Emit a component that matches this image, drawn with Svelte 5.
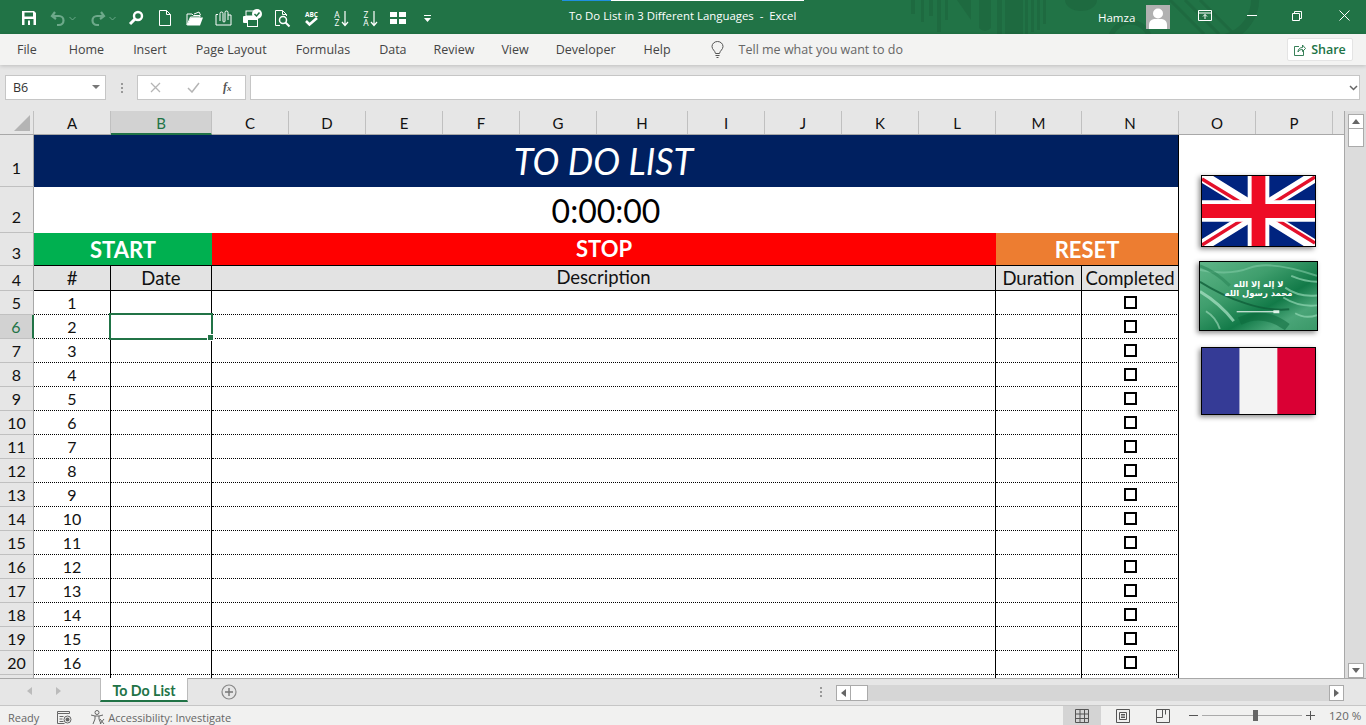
<script>
  const tabs = ["File", "Home", "Insert", "Page Layout", "Formulas", "Data", "Review", "View", "Developer", "Help"];

  // column widths in px, measured at 120% zoom
  const cols = [
    ["A", 77], ["B", 101], ["C", 77], ["D", 77], ["E", 77], ["F", 77], ["G", 77], ["H", 91],
    ["I", 77], ["J", 77], ["K", 77], ["L", 77], ["M", 86], ["N", 97], ["O", 77], ["P", 77],
  ];

  const rows = Array.from({ length: 16 }, (_, i) => ({ head: i + 5, num: i + 1 }));
</script>

<div class="window">
  <header class="titlebar">
    <svg class="pattern" viewBox="0 0 480 34" width="480" height="34" aria-hidden="true">
      <g fill="#1e6a40">
        <rect x="6" y="0" width="4" height="14" /><rect x="16" y="0" width="3" height="22" /><rect x="24" y="0" width="4" height="16" />
        <rect x="32" y="0" width="4" height="32" /><rect x="40" y="0" width="3" height="20" />
        <path d="M52 0l14 20V0zM74 0h12v28q-6 6-12 0z" />
        <rect x="92" y="0" width="5" height="34" /><rect x="100" y="0" width="18" height="34" />
        <rect x="120" y="0" width="3" height="34" /><rect x="126" y="0" width="3" height="32" /><rect x="132" y="0" width="3" height="30" /><rect x="138" y="0" width="3" height="24" />
        <path d="M160 0a16 11 0 0 0 32 0z" />
      </g>
      <g fill="none" stroke="#1e6a40" stroke-width="5">
        <circle cx="225" cy="42" r="20" />
        <path d="M265 0l34 34M280 0l34 34M295 0l34 34" stroke-width="3" />
        <path d="M350 -4a40 40 0 0 1-30 42" stroke-width="8" />
      </g>
    </svg>
    <div class="loadline"></div>

    <div class="qat">
      <svg class="ico save" width="16" height="16" viewBox="0 0 16 16"><path d="M1 1h12l2 2v12H1z" fill="#fff" /><rect x="3.5" y="2.5" width="8.5" height="4" fill="#217346" /><rect x="3.5" y="9" width="9" height="6" fill="#217346" /><rect x="7" y="10.5" width="2" height="4.5" fill="#fff" /></svg>
      <svg class="ico undo" width="16" height="16" viewBox="0 0 16 16"><path d="M5 2L2 6l4 3M2.5 6H9a4.5 4.5 0 0 1 0 9H7" fill="none" stroke="#6da98a" stroke-width="2.2" /></svg>
      <svg class="chev" width="7" height="5" viewBox="0 0 7 5"><path d="M.5 1L3.5 4l3-3" fill="none" stroke="#6da98a" /></svg>
      <svg class="ico redo" width="16" height="16" viewBox="0 0 16 16"><path d="M11 2l3 4-4 3M13.5 6H7a4.5 4.5 0 0 0 0 9h2" fill="none" stroke="#6da98a" stroke-width="2.2" /></svg>
      <svg class="chev" width="7" height="5" viewBox="0 0 7 5"><path d="M.5 1L3.5 4l3-3" fill="none" stroke="#6da98a" /></svg>
      <svg class="ico find" width="16" height="16" viewBox="0 0 16 16"><circle cx="10" cy="6" r="4" fill="none" stroke="#fff" stroke-width="2.4" /><path d="M7 9l-5 5" stroke="#fff" stroke-width="3" /></svg>
      <svg class="ico new" width="14" height="16" viewBox="0 0 14 16"><path d="M1.5.5h7l4 4v11h-11z" fill="none" stroke="#fff" /><path d="M8.5.5v4h4" fill="none" stroke="#fff" /></svg>
      <svg class="ico open" width="17" height="15" viewBox="0 0 17 15"><path d="M1 14V3h5l1.500 1.500H14V6H4.500z" fill="none" stroke="#fff" /><path d="M1 14.500l3.500-8H17l-3 8z" fill="#fff" /><path d="M8 3l5-2 1.500 3" fill="none" stroke="#fff" /></svg>
      <svg class="ico attach" width="17" height="16" viewBox="0 0 17 16"><path d="M3 4.500H1V15h15V5h-3" fill="none" stroke="#fff" /><path d="M5 11V3.500a1.500 1.500 0 0 1 3 0V11a1 1 0 0 0 2 0V2.500a1.500 1.500 0 0 1 3 0V10" fill="none" stroke="#fff" /></svg>
      <svg class="ico print" width="20" height="18" viewBox="0 0 20 18"><rect x="0" y="7" width="15" height="7" rx="1" fill="#fff" /><rect x="3" y="2" width="9" height="5" fill="none" stroke="#fff" /><rect x="4.500" y="10.500" width="10" height="7" fill="#217346" stroke="#fff" /><circle cx="14" cy="5" r="5" fill="#fff" /><path d="M11.500 5l2 2 3-3.500" fill="none" stroke="#217346" stroke-width="1.500" /></svg>
      <svg class="ico preview" width="17" height="17" viewBox="0 0 17 17"><path d="M1.500 15.500V.5h7l4 4V6M6 15.500H1.500M8.500.5v4h4" fill="none" stroke="#fff" /><circle cx="9" cy="10" r="3.500" fill="none" stroke="#fff" stroke-width="1.500" /><path d="M11.500 12.500l4 4" stroke="#fff" stroke-width="2" /></svg>
      <svg class="ico spell" width="17" height="17" viewBox="0 0 17 17"><text x="8.500" y="6.500" text-anchor="middle" class="mini">ABC</text><path d="M3 11l3.500 3.500L14 8" fill="none" stroke="#fff" stroke-width="2.600" /></svg>
      <svg class="ico sort" width="16" height="17" viewBox="0 0 16 17"><text x="4" y="7.500" text-anchor="middle" class="az">A</text><text x="4" y="16" text-anchor="middle" class="az">Z</text><path d="M12 1v14M9 12l3 3.500 3-3.500" fill="none" stroke="#fff" stroke-width="1.200" /></svg>
      <svg class="ico sort2" width="16" height="17" viewBox="0 0 16 17"><text x="4" y="7.500" text-anchor="middle" class="az">Z</text><text x="4" y="16" text-anchor="middle" class="az">A</text><path d="M12 1v14M9 12l3 3.500 3-3.500" fill="none" stroke="#fff" stroke-width="1.200" /></svg>
      <svg class="ico form" width="16" height="12" viewBox="0 0 16 12"><path d="M0 0h7v5H0zM9 0h7v5H9zM0 7h7v5H0zM9 7h7v5H9z" fill="#fff" /></svg>
      <svg class="ico more" width="9" height="7" viewBox="0 0 9 7"><path d="M1 .5h7" stroke="#fff" /><path d="M1 3h7L4.500 7z" fill="#fff" /></svg>
    </div>

    <div class="doc-title">To Do List in 3 Different Languages&nbsp; -&nbsp; Excel</div>

    <div class="win-right">
      <span class="user">Hamza</span>
      <span class="avatar">
        <svg width="24" height="24" viewBox="0 0 24 24"><circle cx="12" cy="8.500" r="5" fill="#fff" /><path d="M3 24v-4q0-5 5-6h8q5 1 5 6v4z" fill="#fff" /></svg>
      </span>
      <svg class="wbtn ribbon-opt" width="14" height="11" viewBox="0 0 14 11"><path d="M.5.5h13v10H.5zM.5 3h13M7 9V4.500M5 6.500l2-2 2 2" fill="none" stroke="#fff" /></svg>
      <svg class="wbtn min" width="10" height="1" viewBox="0 0 10 1"><path d="M0 .5h10" stroke="#fff" /></svg>
      <svg class="wbtn restore" width="10" height="10" viewBox="0 0 10 10"><path d="M.5 2.500h7v7h-7zM2.500 2.500v-2h7v7h-2" fill="none" stroke="#fff" /></svg>
      <svg class="wbtn close" width="11" height="11" viewBox="0 0 11 11"><path d="M.5.5l10 10M10.500.5l-10 10" stroke="#fff" /></svg>
    </div>
  </header>

  <nav class="ribbon">
    {#each tabs as tab}
      <span class="tab">{tab}</span>
    {/each}
    <svg class="bulb" width="13" height="17" viewBox="0 0 13 17"><path d="M4.500 12.500C4 9.500 1 8.500 1 5.500a5.500 5 0 0 1 11 0c0 3-3 4-3.500 7zM4.500 14.500h4M5.500 16.500h2" fill="none" stroke="#555" /></svg>
    <span class="tell">Tell me what you want to do</span>
    <button class="share">
      <svg width="12" height="12" viewBox="0 0 12 12"><path d="M5 2.500H.5v9h9V7M4 8c0-3 2-4.500 4.500-4.500V1l3 3.500-3 3V5.500C6.500 5.500 5 6 4 8z" fill="none" stroke="#217346" stroke-width=".9" /></svg>
      Share
    </button>
  </nav>

  <div class="formulabar">
    <div class="namebox">B6<i class="tri"></i></div>
    <span class="grip"></span>
    <div class="fx-buttons">
      <svg width="11" height="11" viewBox="0 0 11 11"><path d="M1 1l9 9M10 1l-9 9" stroke="#b5b5b5" stroke-width="1.300" /></svg>
      <svg width="13" height="11" viewBox="0 0 13 11"><path d="M1 6l4 4 7-9" fill="none" stroke="#b5b5b5" stroke-width="1.500" /></svg>
      <span class="fx">f<small>x</small></span>
    </div>
    <div class="fx-input"></div>
    <svg class="fx-expand" width="9" height="6" viewBox="0 0 9 6"><path d="M1 1l3.500 3.500L8 1" fill="none" stroke="#666" stroke-width="1.500" /></svg>
  </div>

  <div class="sheet">
    <div class="sheet-main">
      <div class="col-head">
        <div class="corner"><i></i></div>
        {#each cols as [name, w]}
          <div class="col" class:sel={name === "B"} style="width: {w}px">{name}</div>
        {/each}
      </div>

      <div class="grid">
        <div class="rh r1">1</div>
        <div class="title">TO DO LIST</div>
        <div class="blank"></div>

        <div class="rh r2">2</div>
        <div class="timer">0:00:00</div>
        <div class="blank"></div>

        <div class="rh r3">3</div>
        <div class="btn start">START</div>
        <div class="btn stop">STOP</div>
        <div class="btn reset">RESET</div>
        <div class="blank"></div>

        <div class="rh r4">4</div>
        <div class="th">#</div>
        <div class="th">Date</div>
        <div class="th desc">Description</div>
        <div class="th">Duration</div>
        <div class="th last">Completed</div>
        <div class="blank"></div>

        {#each rows as row}
          <div class="rh" class:sel={row.head === 6}>{row.head}</div>
          <div class="td num">{row.num}</div>
          <div class="td"></div>
          <div class="td"></div>
          <div class="td"></div>
          <div class="td last"><span class="check"></span></div>
          <div class="blank"></div>
        {/each}

        <div class="rh tail"></div>
        <div class="td tail"></div>
        <div class="td tail"></div>
        <div class="td tail"></div>
        <div class="td tail"></div>
        <div class="td last tail"></div>
        <div class="blank"></div>
      </div>

      <div class="selection"><i></i></div>

      <svg class="flag uk" viewBox="0 0 115 71" width="115" height="72" preserveAspectRatio="none">
        <rect width="115" height="71" fill="#00237f" />
        <path d="M0 0L115 71M115 0L0 71" stroke="#fff" stroke-width="12" />
        <path d="M0 3L46 31M115 68L69 40M115 1L70 29M0 70L45 42" stroke="#e4112b" stroke-width="3.500" />
        <path d="M57.500 0v71M0 35.500h115" stroke="#fff" stroke-width="22" />
        <path d="M57.500 0v71M0 35.500h115" stroke="#ee0c25" stroke-width="14" />
      </svg>

      <svg class="flag sa" viewBox="0 0 118 69" width="119" height="70" preserveAspectRatio="none">
        <defs>
          <linearGradient id="silk" x1="0" y1="0" x2="1" y2="1">
            <stop offset="0" stop-color="#5fb588" />
            <stop offset=".35" stop-color="#3f9e6d" />
            <stop offset=".62" stop-color="#127a48" />
            <stop offset=".8" stop-color="#4aa578" />
            <stop offset="1" stop-color="#3a9868" />
          </linearGradient>
        </defs>
        <rect width="118" height="69" fill="url(#silk)" />
        <g fill="none">
          <path d="M0 8Q30 14 50 6T118 14" stroke="#7fcaa3" stroke-width="2" opacity=".6" />
          <path d="M0 4Q16 10 30 24" stroke="#2f8a5c" stroke-width="3" opacity=".7" />
          <path d="M0 20Q22 34 46 42T90 48" stroke="#0f5f39" stroke-width="2" opacity=".8" />
          <path d="M0 30Q20 42 34 60" stroke="#a6dfc2" stroke-width="3" opacity=".75" />
          <path d="M6 50Q16 56 20 68" stroke="#a6dfc2" stroke-width="2" opacity=".6" />
          <path d="M86 26Q100 36 118 34M84 36Q100 46 118 44M96 52Q106 58 118 54M92 14Q106 20 118 20" stroke="#90d5b2" stroke-width="2" opacity=".7" />
          <path d="M40 60Q64 48 88 66" stroke="#0c6a3d" stroke-width="8" opacity=".55" />
        </g>
        <text x="59" y="25" text-anchor="middle" class="shahada">لا إله إلا الله</text>
        <text x="59" y="35" text-anchor="middle" class="shahada">محمد رسول الله</text>
        <path d="M37 50.500h42" stroke="#fff" stroke-width="1" />
        <path d="M74 49h6v3h-6z" fill="#dff3e8" />
      </svg>

      <svg class="flag fr" viewBox="0 0 114 67" width="115" height="68" preserveAspectRatio="none">
        <rect width="38" height="67" fill="#353b96" />
        <rect x="38" width="38" height="67" fill="#f3f3f3" />
        <rect x="76" width="38" height="67" fill="#da0034" />
      </svg>
    </div>

    <div class="vscroll">
      <span class="sbtn up"><i></i></span>
      <span class="vthumb"></span>
      <span class="vfill"></span>
      <span class="sbtn down"><i></i></span>
    </div>
  </div>

  <div class="sheetbar">
    <span class="nav-arrow left"></span>
    <span class="nav-arrow right"></span>
    <div class="sheet-tab">To Do List</div>
    <svg class="add" width="16" height="16" viewBox="0 0 16 16"><circle cx="8" cy="8" r="7" fill="none" stroke="#888" stroke-width="1.200" /><path d="M8 4v8M4 8h8" stroke="#777" stroke-width="1.400" /></svg>
    <span class="grip bar-grip"></span>
    <div class="hscroll">
      <span class="hbtn"><i class="l"></i></span>
      <span class="hthumb"></span>
      <span class="hfill"></span>
      <span class="hbtn"><i class="r"></i></span>
    </div>
  </div>

  <footer class="status">
    <span class="ready">Ready</span>
    <svg class="macro" width="15" height="13" viewBox="0 0 15 13"><path d="M.5.5h12v2H.5zM.5 2.500v10h7M2.500 5.500h4M2.500 8h3M2.500 10.500h4" fill="none" stroke="#666" /><circle cx="10.500" cy="8.500" r="3.500" fill="none" stroke="#666" /><circle cx="10.500" cy="8.500" r="2" fill="#666" /></svg>
    <svg class="access" width="15" height="15" viewBox="0 0 15 15"><circle cx="7" cy="2.500" r="2" fill="none" stroke="#666" /><path d="M1 5l4 1h4l4-1M5 6v3l-2 5M9 6v3l2 5M10 9l4 5M14 9l-4 5" fill="none" stroke="#666" /></svg>
    <span class="acc-text">Accessibility: Investigate</span>
    <div class="status-right">
      <span class="view active">
        <svg width="14" height="14" viewBox="0 0 14 14"><path d="M.5.5h13v13H.5zM.5 5h13M.5 9.500h13M5 .5v13M9.500 .5v13" fill="none" stroke="#555" /></svg>
      </span>
      <span class="view">
        <svg width="14" height="14" viewBox="0 0 14 14"><path d="M.5.5h13v13H.5zM3.500 3.500h7v7h-7zM5 5.500h4M5 7h4M5 8.500h4" fill="none" stroke="#555" /></svg>
      </span>
      <span class="view">
        <svg width="14" height="14" viewBox="0 0 14 14"><path d="M.5.5h13v13H.5zM.5 8.500h6V.5M9.500 .5v5" fill="none" stroke="#555" /></svg>
      </span>
      <span class="zbtn minus"></span>
      <div class="slider"><i></i></div>
      <span class="zbtn plus"></span>
      <span class="zoomval">120 %</span>
    </div>
  </footer>
</div>

<style>
  :global(body) {
    margin: 0;
    background: #e6e6e6;
  }
  .window {
    width: 1366px;
    height: 725px;
    display: flex;
    flex-direction: column;
    overflow: hidden;
    font-family: "Open Sans", "Noto Sans", sans-serif;
  }

  /* title bar */
  .titlebar {
    position: relative;
    flex: 0 0 34px;
    background: #217346;
    color: #fff;
    display: flex;
    align-items: center;
    overflow: hidden;
  }
  .pattern {
    position: absolute;
    left: 905px;
    top: 0;
  }
  .loadline {
    position: absolute;
    left: 562px;
    top: 0;
    width: 242px;
    height: 1px;
    background: linear-gradient(90deg, #1f8fe0 0 49px, #fff 49px);
  }
  .qat {
    position: relative;
    display: flex;
    align-items: center;
    padding-left: 21px;
    width: 440px;
    height: 34px;
    margin-top: 2px;
  }
  .ico {
    flex: none;
    overflow: visible;
  }
  .undo { margin-left: 13px; }
  .chev { margin-left: 3px; }
  .redo { margin-left: 14px; }
  .find { margin-left: 12px; }
  .new { margin-left: 14px; }
  .open { margin-left: 14px; }
  .attach { margin-left: 12px; }
  .print { margin-left: 11px; }
  .preview { margin-left: 11px; }
  .spell { margin-left: 12px; }
  .sort { margin-left: 13px; }
  .sort2 { margin-left: 13px; }
  .form { margin-left: 12px; }
  .more { margin-left: 17px; }
  .mini {
    font: 700 6.500px "Open Sans", sans-serif;
    fill: #fff;
  }
  .az {
    font: 400 8.500px "Open Sans", sans-serif;
    fill: #fff;
  }
  .doc-title {
    position: absolute;
    left: 569px;
    top: 8px;
    font-size: 11.400px;
    line-height: 16px;
    white-space: nowrap;
  }
  .win-right {
    position: absolute;
    left: 1098px;
    top: 0;
    right: 0;
    height: 34px;
    display: flex;
    align-items: center;
  }
  .user {
    font-size: 11.500px;
    width: 48px;
  }
  .avatar {
    width: 24px;
    height: 24px;
    background: #b1b1b1;
    display: block;
  }
  .avatar svg {
    display: block;
  }
  .wbtn {
    margin-top: -3px;
  }
  .ribbon-opt { margin-left: 28px; }
  .min { margin-left: 35px; }
  .restore { margin-left: 35px; }
  .close { margin-left: 37px; }

  /* ribbon tabs */
  .ribbon {
    flex: 0 0 31px;
    background: #f3f3f2;
    display: flex;
    align-items: center;
    padding-left: 17px;
    box-shadow: 0 1px 4px rgba(0, 0, 0, 0.18);
    position: relative;
    z-index: 1;
    font-size: 12.500px;
    color: #444;
  }
  .tab {
    margin-right: 29px;
    white-space: nowrap;
  }
  .tab:first-child {
    margin-right: 32px;
  }
  .tab:nth-child(6),
  .tab:nth-child(7),
  .tab:nth-child(8) {
    margin-right: 27px;
  }
  .tab:nth-child(9) {
    margin-right: 28px;
  }
  .bulb {
    margin-left: 11px;
  }
  .tell {
    margin-left: 15px;
    color: #666;
  }
  .share {
    position: absolute;
    left: 1287px;
    top: 4px;
    width: 66px;
    height: 23px;
    background: #fff;
    border: 1px solid #e4e4e4;
    border-radius: 2px;
    color: #217346;
    font: 600 12.500px "Open Sans", sans-serif;
    display: flex;
    align-items: center;
    justify-content: center;
    gap: 5px;
    padding: 0;
  }

  /* formula bar */
  .formulabar {
    flex: 0 0 46px;
    box-sizing: border-box;
    background: #e6e6e6;
    display: flex;
    align-items: center;
    padding: 0 0 1px 5px;
    position: relative;
  }
  .namebox {
    width: 101px;
    height: 25px;
    box-sizing: border-box;
    background: #fff;
    border: 1px solid #c6c6c6;
    font-size: 12.500px;
    line-height: 24px;
    padding-left: 7px;
    color: #333;
    position: relative;
  }
  .tri {
    position: absolute;
    right: 5px;
    top: 9px;
    border: 4px solid transparent;
    border-top: 4px solid #777;
    border-bottom: 0;
  }
  .grip {
    width: 2px;
    height: 10px;
    margin: 0 14px 0 15px;
    background: repeating-linear-gradient(#999 0 2px, transparent 2px 4px);
  }
  .fx-buttons {
    width: 109px;
    height: 25px;
    box-sizing: border-box;
    background: #fff;
    border: 1px solid #c6c6c6;
    display: flex;
    align-items: center;
    padding-left: 12px;
    margin-right: 4px;
  }
  .fx-buttons svg:nth-child(2) {
    margin-left: 26px;
  }
  .fx {
    margin-left: 23px;
    font: italic 700 12px "Liberation Serif", serif;
    color: #555;
  }
  .fx small {
    font-size: 9px;
  }
  .fx-input {
    width: 1110px;
    height: 25px;
    box-sizing: border-box;
    background: #fff;
    border: 1px solid #c6c6c6;
  }
  .fx-expand {
    position: absolute;
    left: 1349px;
    top: 20px;
  }

  /* sheet */
  .sheet {
    flex: 0 0 567px;
    display: flex;
    overflow: hidden;
  }
  .sheet-main {
    position: relative;
    width: 1345px;
    box-sizing: border-box;
    border-right: 1px solid #a8a8a8;
    background: #fff;
    overflow: hidden;
  }
  .col-head {
    height: 24px;
    box-sizing: border-box;
    display: flex;
    background: #e6e6e6;
    border-bottom: 1px solid #a8a8a8;
  }
  .corner {
    width: 34px;
    box-sizing: border-box;
    border-right: 1px solid #c0c0c0;
    position: relative;
  }
  .corner i {
    position: absolute;
    right: 3px;
    bottom: 3px;
    width: 0;
    height: 0;
    border-left: 16px solid transparent;
    border-bottom: 16px solid #b4b4b4;
  }
  .col {
    box-sizing: border-box;
    border-right: 1px solid #c0c0c0;
    text-align: center;
    font: 15px/25px Lato, sans-serif;
    color: #111;
  }
  .col.sel {
    background: #d2d2d2;
    color: #217346;
    border-bottom: 2px solid #217346;
    height: 24px;
  }
  .grid {
    display: grid;
    grid-template-columns: 34px 77px 101px 784px 86px 97px 1fr;
    grid-template-rows: 52px 46px 33px 25px repeat(16, 24px) 4px;
    font-family: Lato, sans-serif;
  }
  .rh {
    box-sizing: border-box;
    background: #e6e6e6;
    border-right: 1px solid #a8a8a8;
    border-bottom: 1px solid #c0c0c0;
    font: 16px/24px Lato, sans-serif;
    text-align: center;
    color: #111;
  }
  .rh.r1 { line-height: 66px; }
  .rh.r2 { line-height: 60px; }
  .rh.r3 { line-height: 40px; }
  .rh.r4 { line-height: 27px; }
  .rh.sel {
    background: #d2d2d2;
    color: #217346;
    border-right: 2px solid #217346;
  }
  .rh.tail {
    border-bottom: 0;
  }
  .title {
    grid-column: span 5;
    box-sizing: border-box;
    background: #002060;
    color: #fff;
    border-right: 1px solid #000;
    padding-right: 5px;
    font: italic 400 36px/52px Lato, sans-serif;
    text-align: center;
  }
  .timer {
    grid-column: span 5;
    border-right: 1px solid #000;
    font: 32px/48px Lato, sans-serif;
    text-align: center;
    color: #000;
  }
  .btn {
    box-sizing: border-box;
    border-bottom: 1px solid #000;
    color: #fff;
    font: 700 22px/34px Lato, sans-serif;
    text-align: center;
  }
  .start {
    grid-column: span 2;
    background: #00b050;
  }
  .stop {
    background: #f00;
    line-height: 32px;
  }
  .reset {
    grid-column: span 2;
    background: #ed7d31;
    border-right: 1px solid #000;
  }
  .th {
    box-sizing: border-box;
    background: #e3e3e3;
    border-right: 1px solid #000;
    border-bottom: 1px solid #000;
    font: 18.500px/25px Lato, sans-serif;
    text-align: center;
    color: #111;
    white-space: nowrap;
  }
  .th.desc {
    line-height: 23px;
  }
  .td {
    box-sizing: border-box;
    border-right: 1px solid #000;
    border-bottom: 1px dotted #000;
    display: flex;
    align-items: center;
    justify-content: center;
    font-size: 16px;
    color: #111;
  }
  .td.tail {
    border-bottom: 0;
  }
  .check {
    width: 13px;
    height: 13px;
    box-sizing: border-box;
    border: 2px solid #000;
    background: #fff;
    margin-bottom: 1px;
  }
  .blank {
    background: #fff;
  }

  /* things lying over the cells */
  .selection {
    position: absolute;
    left: 109px;
    top: 202px;
    width: 104px;
    height: 27px;
    box-sizing: border-box;
    border: 2px solid #217346;
  }
  .selection i {
    position: absolute;
    right: -3px;
    bottom: -3px;
    width: 5px;
    height: 5px;
    background: #217346;
    border: 1px solid #fff;
  }
  .flag {
    position: absolute;
    box-sizing: border-box;
    border: 1px solid #000;
    box-shadow: -2px 2px 5px rgba(0, 0, 0, 0.45);
    display: block;
  }
  .flag.uk {
    left: 1201px;
    top: 64px;
  }
  .flag.sa {
    left: 1199px;
    top: 150px;
  }
  .flag.fr {
    left: 1201px;
    top: 236px;
  }
  .shahada {
    font: 700 8.500px "DejaVu Sans", sans-serif;
    fill: #fff;
  }

  /* scroll bars */
  .vscroll {
    flex: 1;
    background: #dcdcdc;
    display: flex;
    flex-direction: column;
    align-items: center;
    padding: 3px 0 0 1px;
  }
  .sbtn {
    flex: 0 0 15px;
    width: 16px;
    box-sizing: border-box;
    background: #fff;
    border: 1px solid #aaa;
    display: flex;
    align-items: center;
    justify-content: center;
  }
  .sbtn i {
    border: 4px solid transparent;
  }
  .up i {
    border-top: 0;
    border-bottom: 5px solid #666;
  }
  .down i {
    border-bottom: 0;
    border-top: 5px solid #666;
  }
  .vthumb {
    flex: 0 0 18px;
    width: 16px;
    box-sizing: border-box;
    background: #fff;
    border: 1px solid #aaa;
    border-top: 0;
  }
  .vfill {
    flex: 1;
  }

  /* sheet tabs */
  .sheetbar {
    flex: 0 0 28px;
    box-sizing: border-box;
    background: #e6e6e6;
    border-top: 1px solid #a8a8a8;
    border-bottom: 1px solid #c6c6c6;
    display: flex;
    align-items: flex-start;
    position: relative;
  }
  .nav-arrow {
    position: absolute;
    top: 8px;
    border: 4px solid transparent;
  }
  .nav-arrow.left {
    left: 27px;
    border-left: 0;
    border-right: 5px solid #bbb;
  }
  .nav-arrow.right {
    left: 56px;
    border-right: 0;
    border-left: 5px solid #bbb;
  }
  .sheet-tab {
    margin-left: 100px;
    width: 88px;
    height: 24px;
    box-sizing: border-box;
    background: #fff;
    border-bottom: 2px solid #217346;
    border-left: 1px solid #bbb;
    border-right: 1px solid #bbb;
    color: #217346;
    font: 700 14.200px/25px Lato, sans-serif;
    text-align: center;
    margin-top: -1px;
  }
  .add {
    margin: 5px 0 0 33px;
  }
  .bar-grip {
    position: absolute;
    left: 805px;
    top: 8px;
  }
  .hscroll {
    position: absolute;
    left: 836px;
    top: 6px;
    width: 508px;
    height: 16px;
    background: #d6d6d6;
    display: flex;
  }
  .hbtn {
    width: 15px;
    box-sizing: border-box;
    background: #fff;
    border: 1px solid #aaa;
    display: flex;
    align-items: center;
    justify-content: center;
  }
  .hbtn i {
    border: 4px solid transparent;
  }
  .hbtn i.l {
    border-left: 0;
    border-right: 5px solid #666;
  }
  .hbtn i.r {
    border-right: 0;
    border-left: 5px solid #666;
  }
  .hthumb {
    width: 17px;
    box-sizing: border-box;
    background: #fff;
    border: 1px solid #aaa;
    border-left: 0;
  }
  .hfill {
    flex: 1;
  }

  /* status bar */
  .status {
    flex: 1;
    box-sizing: border-box;
    padding-top: 3px;
    background: #f1f1f0;
    display: flex;
    align-items: center;
    position: relative;
    font-size: 11px;
    color: #666;
  }
  .ready {
    margin-left: 8px;
  }
  .macro {
    margin-left: 18px;
  }
  .access {
    margin-left: 18px;
  }
  .acc-text {
    margin-left: 3px;
  }
  .status-right {
    position: absolute;
    left: 1063px;
    top: 0;
    bottom: 0;
    right: 0;
    display: flex;
    align-items: center;
  }
  .view {
    width: 36px;
    height: 100%;
    margin-right: 4px;
    display: flex;
    align-items: center;
    justify-content: center;
  }
  .view.active {
    width: 38px;
    background: #d4d4d4;
  }
  .zbtn {
    position: relative;
    width: 9px;
    height: 9px;
    margin-left: 4px;
  }
  .zbtn::before {
    content: "";
    position: absolute;
    left: 0;
    right: 0;
    top: 4px;
    height: 1px;
    background: #555;
  }
  .plus::after {
    content: "";
    position: absolute;
    top: 0;
    bottom: 0;
    left: 4px;
    width: 1px;
    background: #555;
  }
  .slider {
    position: relative;
    width: 100px;
    height: 1px;
    margin-left: 4px;
    background: #aaa;
  }
  .slider i {
    position: absolute;
    left: 51px;
    top: -5px;
    width: 5px;
    height: 11px;
    background: #666;
  }
  .zoomval {
    margin-left: 14px;
    font-size: 11.500px;
  }
</style>
